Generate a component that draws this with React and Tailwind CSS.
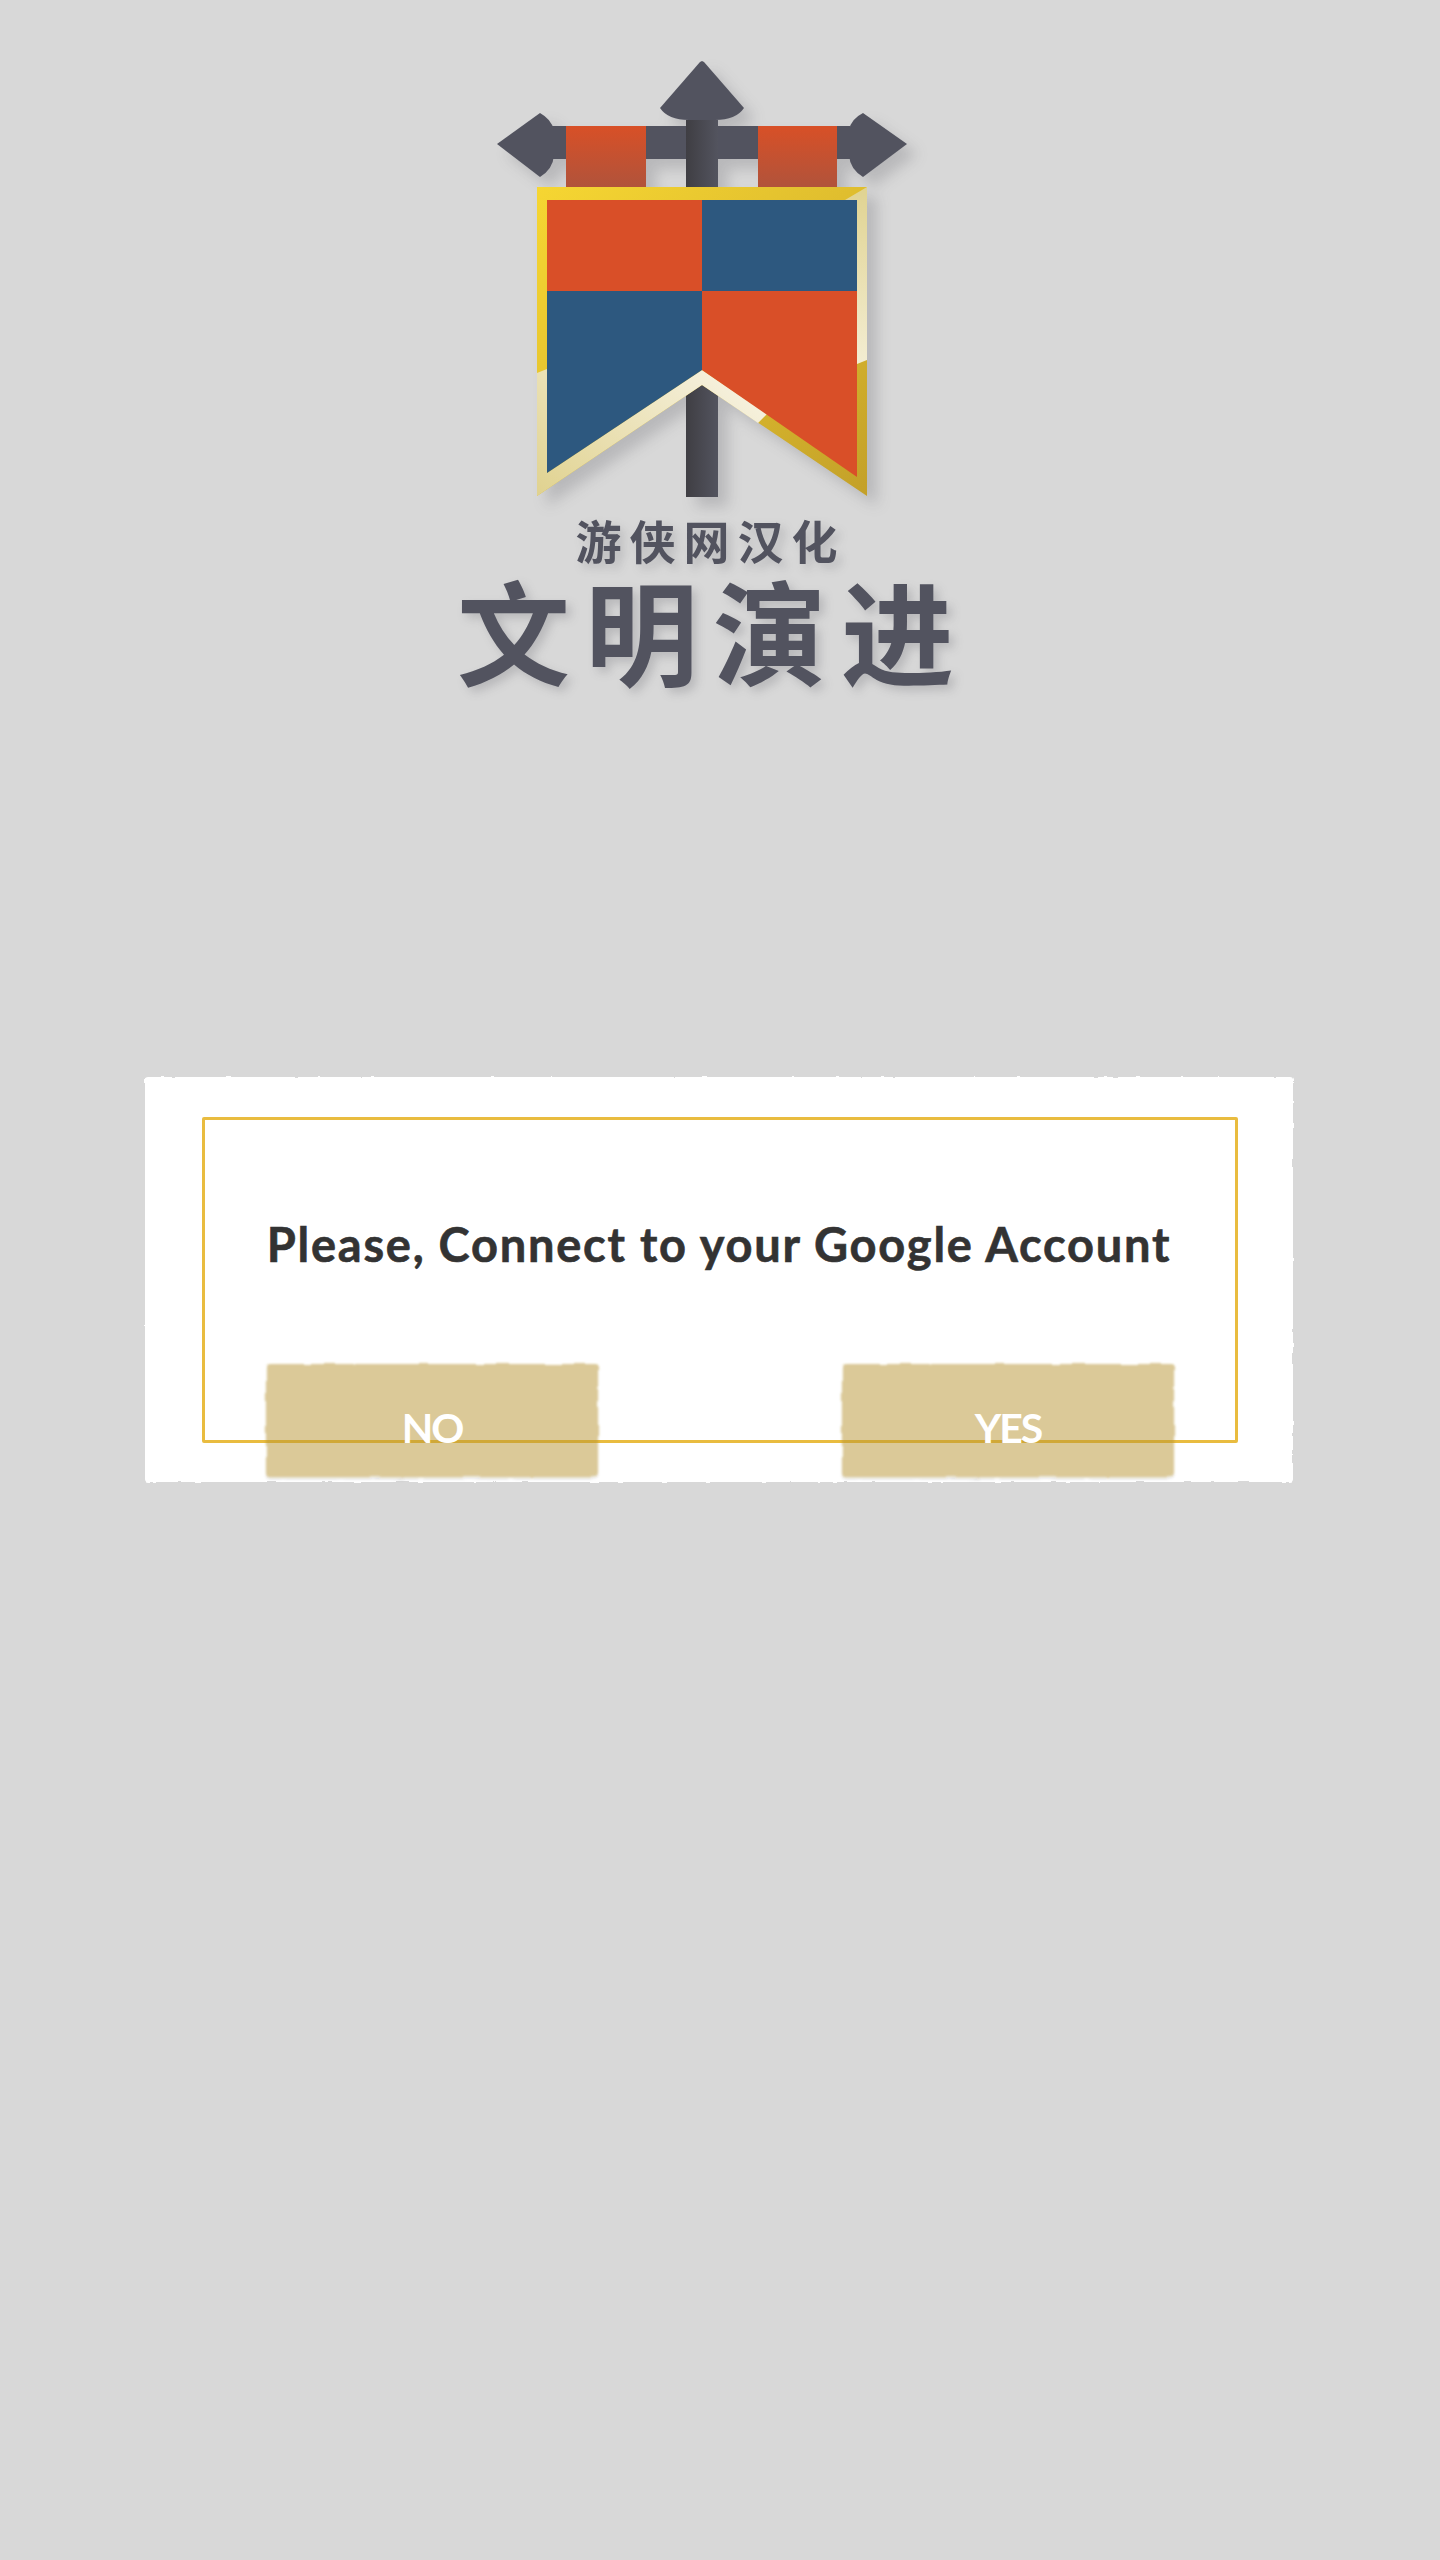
const answers = ['NO', 'YES']

function Logo() {
  return (
    <svg width="420" height="446" viewBox="490 55 420 446" className="block drop-shadow-[10px_10px_7px_rgba(60,60,70,0.2)]">
      <defs>
        <linearGradient id="gold" x1="0" y1="0" x2="1" y2="1">
          <stop offset="0" stopColor="#f6d632" />
          <stop offset="0.5" stopColor="#dfbd2e" />
          <stop offset="1" stopColor="#c3a029" />
        </linearGradient>
        <linearGradient id="paleLeft" x1="0" y1="1" x2="1" y2="0.3">
          <stop offset="0" stopColor="#e0d28f" />
          <stop offset="1" stopColor="#f6f1de" />
        </linearGradient>
        <linearGradient id="paleRight" x1="0" y1="0" x2="0" y2="1">
          <stop offset="0" stopColor="#e0d391" />
          <stop offset="1" stopColor="#f3edd2" />
        </linearGradient>
        <linearGradient id="strap" x1="0" y1="0" x2="0" y2="1">
          <stop offset="0" stopColor="#d85027" />
          <stop offset="1" stopColor="#b0533b" />
        </linearGradient>
        <linearGradient id="pole" x1="0" y1="0" x2="1" y2="0">
          <stop offset="0" stopColor="#3f3e43" />
          <stop offset="1" stopColor="#53545f" />
        </linearGradient>
      </defs>

      {/* crossbar and tips */}
      <rect x="550" y="126" width="300" height="33" fill="#52535f" />
      <path d="M497 144 L540 113 Q551 119 554 130 V155 Q553 169 540 177 Z" fill="#52535f" />
      <path d="M907 144 L863 113 Q851 119 849 130 V155 Q850 169 863 177 Z" fill="#52535f" />
      <rect x="686" y="120" width="32" height="377" fill="url(#pole)" />
      <path d="M702 61 L704 62 L744 108 Q736 120 715 120 H689 Q668 120 660 108 L700 62 Z" fill="#52535f" />
      <rect x="566" y="126" width="80" height="62" fill="url(#strap)" />
      <rect x="758" y="126" width="79" height="62" fill="url(#strap)" />

      {/* banner */}
      <path d="M537 187 H867 V496 L702 385 L537 496 Z" fill="url(#gold)" />
      <path d="M537 373 L547 369 V473 L702 370 L767 414 L758 423 L702 385 L537 496 Z" fill="url(#paleLeft)" />
      <path d="M845 200 L867 187 V360 L857 364 V200 Z" fill="url(#paleRight)" />
      <path d="M547 200 H702 V291 H547 Z" fill="#d94f28" />
      <path d="M702 200 H857 V291 H702 Z" fill="#2d587f" />
      <path d="M547 291 H702 V370 L547 473 Z" fill="#2d587f" />
      <path d="M702 291 H857 V477 L702 370 Z" fill="#d94f28" />
    </svg>
  )
}

export default function App() {
  return (
    <div className="h-[2560px] bg-[#d8d8d8] overflow-hidden" style={{ fontFamily: 'Lato, "Noto Sans CJK SC", sans-serif' }}>
      {/* hidden filters for the torn paper edges */}
      <svg width="0" height="0" className="absolute">
        <filter id="rough" x="-2%" y="-5%" width="104%" height="110%">
          <feTurbulence type="fractalNoise" baseFrequency="0.09" numOctaves="2" seed="4" />
          <feDisplacementMap in="SourceGraphic" scale="2.5" xChannelSelector="R" yChannelSelector="G" />
          <feGaussianBlur stdDeviation="0.4" />
        </filter>
        <filter id="roughBtn" x="-5%" y="-10%" width="110%" height="120%">
          <feTurbulence type="fractalNoise" baseFrequency="0.04" numOctaves="2" seed="9" />
          <feDisplacementMap in="SourceGraphic" scale="4" xChannelSelector="R" yChannelSelector="G" />
          <feGaussianBlur stdDeviation="1.3" />
        </filter>
      </svg>

      {/* logo */}
      <div className="ml-[450px] w-[500px] pt-[55px] flex flex-col items-center">
        <Logo />
        <div className="ml-[26px] flex flex-col items-center whitespace-nowrap font-bold text-[#52535f] drop-shadow-[5px_5px_5px_rgba(60,60,70,0.2)]">
          <div className="mt-[11px] mr-[5px] text-[46px] leading-[60px] tracking-[8px]">游侠网汉化</div>
          <div className="mt-[-4px] text-[113px] leading-[130px] tracking-[15px]">文明演进</div>
        </div>
      </div>

      {/* dialog */}
      <div className="relative ml-[145px] mt-[379px] w-[1148px] h-[405px]">
        <div className="absolute inset-0 bg-white rounded-[3px] [filter:url(#rough)]" />
        <div className="absolute left-[57px] top-[40px] w-[1036px] h-[326px] border-[3px] border-[#e9bc3f] rounded-[2px]" />
        <div className="relative flex flex-col items-center pt-[137px]">
          <h1 className="text-[47px] leading-[60px] font-bold text-[#333333] tracking-[1.75px] whitespace-nowrap [-webkit-text-stroke:0.6px_#333333]">
            Please, Connect to your Google Account
          </h1>
          <div className="mt-[90px] w-full pl-[121px] pr-[119px] flex justify-between">
            {answers.map((label) => (
              <button key={label} className="relative w-[332px] h-[113px]">
                <span className="absolute inset-0 bg-[#b79333]/50 rounded-[4px] shadow-[0_2px_2px_rgba(0,0,0,0.15)] [filter:url(#roughBtn)]" />
                <span className="relative block pt-[15px] text-[41px] leading-[50px] font-bold text-white tracking-[-2px]">{label}</span>
              </button>
            ))}
          </div>
        </div>
      </div>
    </div>
  )
}
